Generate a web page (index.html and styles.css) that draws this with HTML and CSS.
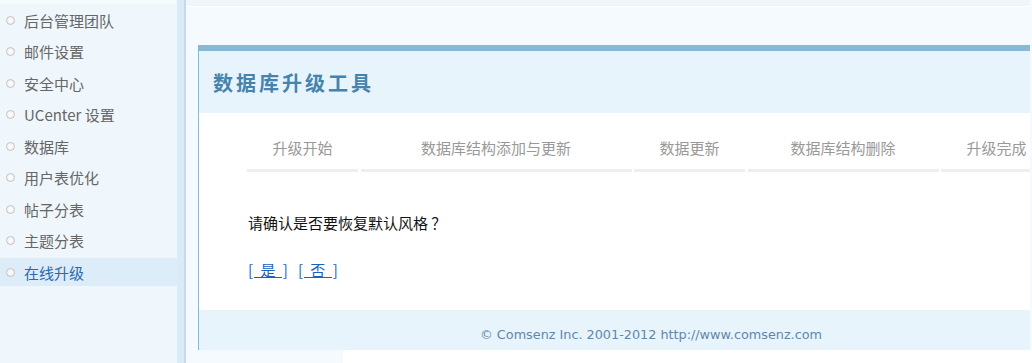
FILE: index.html
```html
<!DOCTYPE html>
<html lang="zh-CN">
<head>
<meta charset="utf-8">
<title>数据库升级工具</title>
<link rel="stylesheet" href="styles.css">
</head>
<body>
<div class="page">
  <aside class="sidebar">
    <ul class="menu">
      <li class="item"><span class="dot"></span>后台管理团队</li>
      <li class="item"><span class="dot"></span>邮件设置</li>
      <li class="item"><span class="dot"></span>安全中心</li>
      <li class="item"><span class="dot"></span>UCenter 设置</li>
      <li class="item"><span class="dot"></span>数据库</li>
      <li class="item"><span class="dot"></span>用户表优化</li>
      <li class="item"><span class="dot"></span>帖子分表</li>
      <li class="item"><span class="dot"></span>主题分表</li>
      <li class="item active"><span class="dot"></span>在线升级</li>
    </ul>
  </aside>
  <div class="divider"></div>
  <main class="main">
    <div class="frame">
      <div class="clip">
        <section class="box">
          <header class="box-header">
            <h1 class="title">数据库升级工具</h1>
          </header>
          <div class="box-body">
            <div class="steps">
              <div class="step w-s">升级开始</div>
              <div class="step w-l">数据库结构添加与更新</div>
              <div class="step w-s">数据更新</div>
              <div class="step w-m">数据库结构删除</div>
              <div class="step w-s">升级完成</div>
            </div>
            <p class="confirm">请确认是否要恢复默认风格 ？</p>
            <p class="actions"><a href="#" class="act">[ 是 ]</a><a href="#" class="act">[ 否 ]</a></p>
          </div>
          <footer class="box-footer">© Comsenz Inc. 2001-2012 http://www.comsenz.com</footer>
        </section>
      </div>
    </div>
    <div class="tail"></div>
  </main>
</div>
</body>
</html>
```

FILE: styles.css
```css
html, body {
  margin: 0;
  padding: 0;
  background: #ffffff;
}
body {
  font-family: "Noto Sans CJK SC", "Liberation Sans", sans-serif;
  font-size: 15px;
}
.page {
  display: flex;
  width: 1032px;
  height: 363px;
  overflow: hidden;
}
.sidebar {
  width: 177px;
  flex: none;
  background: #f0f7fc;
  border-top: 4px solid #f5fafd;
  box-sizing: border-box;
}
.menu {
  list-style: none;
  margin: 0;
  padding: 2px 0 0 0;
}
.item {
  display: flex;
  align-items: center;
  height: 28px;
  margin-bottom: 3.5px;
  padding-left: 6px;
  color: #666666;
  white-space: nowrap;
}
.item.active {
  background: #dcecf8;
  color: #2a69ae;
}
.dot {
  width: 9px;
  height: 9px;
  box-sizing: border-box;
  border-radius: 50%;
  border: 1.5px solid #c4c4c4;
  background: radial-gradient(circle at 50% 50%, #ffffff 0, #f4f4f4 60%, #e0e0e0 100%);
  margin-right: 9px;
  flex: none;
}
.divider {
  width: 7px;
  flex: none;
  background: #dbeaf7;
  border-right: 2px solid #c4d9ea;
}
.main {
  width: 846px;
  flex: none;
  display: flex;
  flex-direction: column;
}
.frame {
  height: 350px;
  background: #f5faff;
  flex: none;
}
.clip {
  width: 844px;
  height: 350px;
  overflow: hidden;
  border-top: 6px solid #eef5fb;
  box-sizing: border-box;
}
.clip::before {
  content: "";
  display: block;
  height: 1px;
  background: #ffffff;
}
.box {
  width: 904px;
  margin: 38px 0 0 12px;
  border-top: 6px solid #87b9d6;
  border-left: 1px solid #7fbcda;
}
.box-header {
  height: 62px;
  background: #e8f4fb;
  display: flex;
  align-items: center;
  padding-left: 14px;
}
.title {
  margin: 0;
  font-size: 20px;
  font-weight: bold;
  letter-spacing: 3px;
  color: #4683ad;
  line-height: 24px;
  padding-top: 2px;
}
.box-body {
  height: 197px;
  background: #ffffff;
  padding: 13px 0 0 48px;
  box-sizing: border-box;
}
.steps {
  display: flex;
  gap: 2.5px;
}
.step {
  height: 43px;
  line-height: 43px;
  text-align: center;
  color: #999999;
  border-bottom: 3px solid #eeeeee;
  white-space: nowrap;
  flex: none;
}
.w-s { width: 111px; }
.w-l { width: 271px; }
.w-m { width: 191px; }
.confirm {
  margin: 41px 0 0 1px;
  line-height: 20px;
  color: #111111;
}
.actions {
  margin: 27px 0 0 1px;
  line-height: 20px;
  display: flex;
  gap: 10px;
}
.act {
  color: #1762c4;
  text-decoration: underline;
  word-spacing: 4px;
}
.box-footer {
  height: 40px;
  box-sizing: border-box;
  background: #e8f4fb;
  padding-top: 17px;
  line-height: 16px;
  text-align: center;
  font-family: "DejaVu Sans", "Liberation Sans", sans-serif;
  font-size: 12.8px;
  color: #5f87ab;
}
.tail {
  width: 157px;
  height: 13px;
  background: #f5faff;
}
```
